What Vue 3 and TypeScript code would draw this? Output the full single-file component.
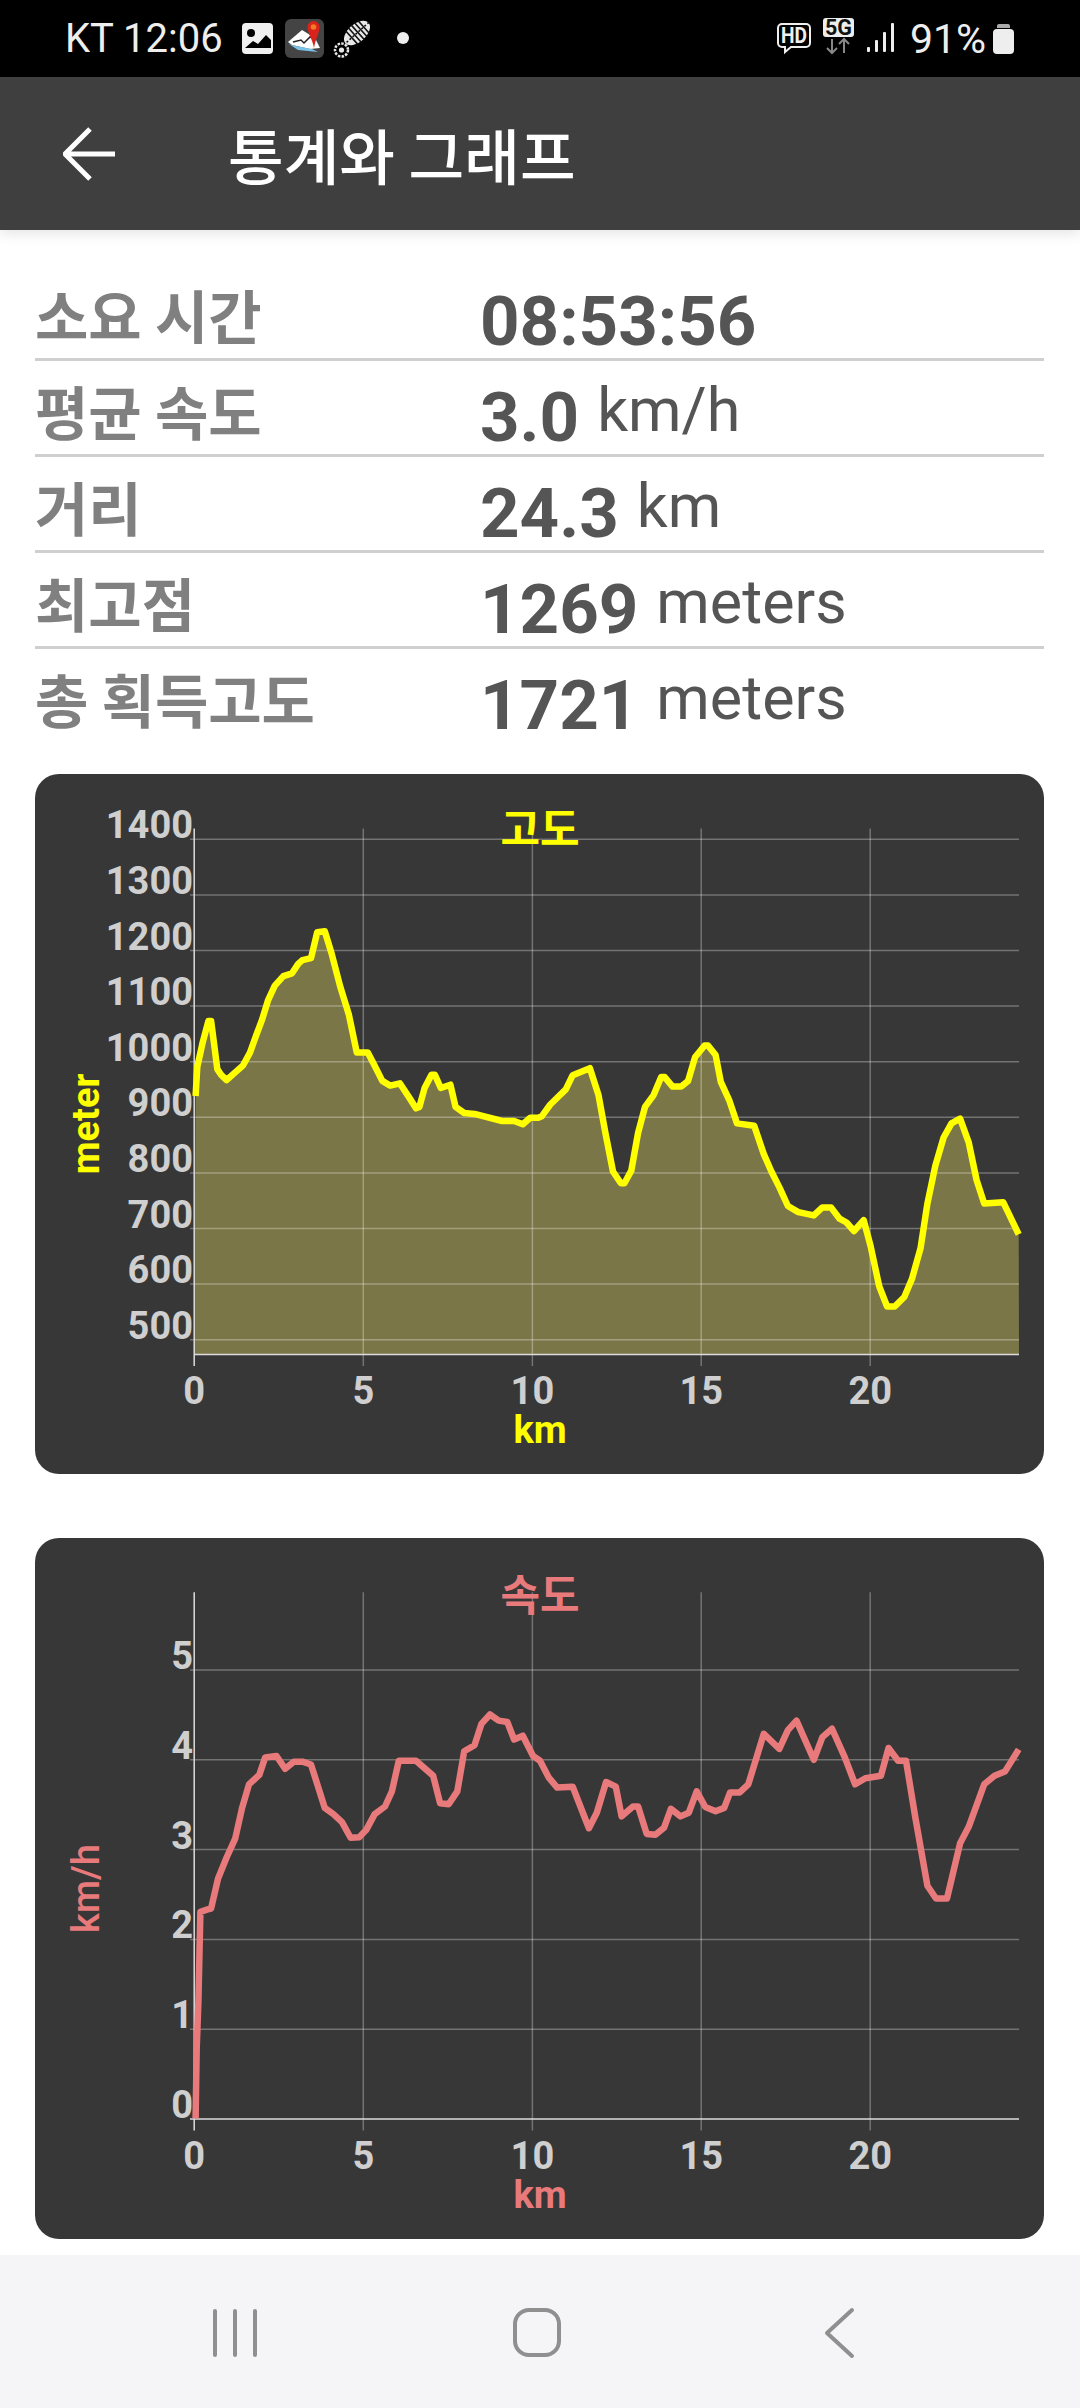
<script setup lang="ts">
type P = [number, number]

const toPts = (l: P[], r: P[], cut: number, y0: number): P[] => [
  ...l.filter((p) => p[0] <= cut).map(([x, y]): P => [x / 2.904 + 20, y / 2.119 + y0]),
  ...r.map(([x, y]): P => [x / 2.904 + 540, y / 2.119 + y0]),
]
const str = (a: P[]) => a.map(([x, y]) => `${x.toFixed(1)},${y.toFixed(1)}`).join(' ')

const elev = toPts(
  [[510,712],[515,650],[530,600],[547,553],[555,553],[565,610],[573,655],[585,668],[600,678],[625,662],[648,647],[668,620],[685,585],[703,550],[720,510],[740,478],[765,458],[790,452],[808,432],[820,424],[845,420],[863,365],[885,363],[905,410],[930,480],[955,540],[978,620],[1010,620],[1030,648],[1052,680],[1075,690],[1103,685],[1130,715],[1150,738],[1160,735],[1175,695],[1195,667],[1205,667],[1222,695],[1250,688],[1265,735],[1290,748],[1320,750],[1400,765],[1435,765],[1460,772],[1482,758],[1505,758]],
  [[5,755],[30,730],[75,698],[95,668],[145,653],[170,710],[190,790],[212,872],[235,897],[245,897],[265,870],[285,790],[305,735],[330,710],[352,672],[362,672],[385,692],[410,692],[430,680],[450,630],[478,605],[488,605],[510,625],[525,682],[550,722],[572,770],[622,775],[650,835],[672,872],[695,905],[720,945],[750,958],[795,965],[820,948],[845,948],[870,972],[890,980],[912,998],[940,975],[960,1030],[985,1115],[1008,1158],[1030,1158],[1058,1138],[1080,1100],[1105,1035],[1125,940],[1148,860],[1172,800],[1195,770],[1220,760],[1245,810],[1268,890],[1290,940],[1345,937],[1390,1005]],
  1510,
  760,
)
const speed = toPts(
  [[510,1248],[513,1100],[518,1000],[524,810],[545,805],[555,803],[575,740],[600,695],[625,655],[645,590],[665,540],[695,520],[712,483],[745,480],[770,507],[795,492],[820,492],[845,498],[885,590],[910,603],[935,620],[960,653],[985,652],[1005,637],[1030,603],[1060,587],[1080,555],[1100,490],[1150,490],[1200,522],[1220,580],[1245,582],[1270,555],[1290,470],[1320,457],[1340,412],[1365,392],[1390,405],[1415,408],[1435,445],[1460,437],[1490,480]],
  [[0,490],[25,525],[50,547],[95,545],[142,633],[165,600],[192,535],[220,545],[237,608],[270,587],[285,587],[310,645],[335,647],[360,632],[380,592],[408,608],[432,600],[455,555],[480,588],[510,597],[535,590],[552,557],[580,557],[605,540],[650,433],[695,465],[720,425],[745,405],[795,488],[820,440],[848,422],[885,483],[915,540],[945,527],[990,522],[1012,463],[1040,490],[1063,490],[1090,610],[1125,755],[1150,782],[1182,782],[1220,665],[1245,630],[1290,540],[1320,522],[1350,513],[1390,466]],
  1490,
  1530,
)

const xTicks = [
  { x: 194.2, t: '0' },
  { x: 363.3, t: '5' },
  { x: 532.4, t: '10' },
  { x: 701.2, t: '15' },
  { x: 870.2, t: '20' },
]
const elevY = [1400, 1300, 1200, 1100, 1000, 900, 800, 700, 600, 500].map((v, i) => ({
  v,
  y: 839.3 + i * 55.6,
}))
const speedY = [5, 4, 3, 2, 1, 0].map((v, i) => ({ v, y: 1670.6 + i * 89.76 }))

const rows = [
  { label: '소요 시간', value: '08:53:56', unit: '' },
  { label: '평균 속도', value: '3.0', unit: 'km/h' },
  { label: '거리', value: '24.3', unit: 'km' },
  { label: '최고점', value: '1269', unit: 'meters' },
  { label: '총 획득고도', value: '1721', unit: 'meters' },
]
</script>

<template>
  <div class="page">
    <div class="status">
      <span class="clock">KT 12:06</span>
      <svg class="s-icons" width="190" height="77" viewBox="235 0 190 77">
        <rect x="242" y="23" width="31" height="31" rx="4" fill="#f0f0f0" />
        <circle cx="251" cy="33" r="4" fill="#000" />
        <path d="M245 48l8-7 5 3 8-9 5 5v8h-26z" fill="#000" />
        <rect x="285" y="19" width="39" height="39" rx="6" fill="#444" />
        <path d="M288 42l14-12 13 8 5 10-10 1-18-4z" fill="#fff" />
        <path d="M289 44l9 6 20 2-6-3-16-3z" fill="#7cc2e4" />
        <path d="M293 42l8-2 3 3 6-6 5 2" fill="none" stroke="#222" stroke-width="1.500" />
        <path d="M307.500 27a6 6 0 1 1 12 0c0 6-4 12-5.500 21-1.500-9-6.500-15-6.500-21z" fill="#d9231c" />
        <circle cx="313.500" cy="27" r="2.800" fill="#ef7d20" />
        <g transform="rotate(48 357 33)">
          <ellipse cx="357" cy="33" rx="9" ry="15.500" fill="#e8e8e8" />
          <path d="M348 24h18M347 28h20M347 32h20M347 36h20M348 40h18" stroke="#111" stroke-width="1.600" />
          <path d="M357 17v32" stroke="#111" stroke-width="1.600" stroke-dasharray="2 2" />
        </g>
        <circle cx="341.500" cy="50" r="6.500" fill="none" stroke="#e8e8e8" stroke-width="2.500" stroke-dasharray="2.500 1.200" />
        <circle cx="341.500" cy="50" r="2.600" fill="#e8e8e8" />
        <circle cx="403" cy="38" r="6" fill="#eee" />
      </svg>
      <span class="spacer"></span>
      <svg class="hd" width="120" height="60" viewBox="775 10 120 60">
        <path d="M782 25h24a4 4 0 0 1 4 4v15a4 4 0 0 1-4 4h-15l-6 5v-5h-3a4 4 0 0 1-4-4v-15a4 4 0 0 1 4-4z" fill="none" stroke="#eee" stroke-width="2" />
        <text x="794" y="44" class="tiny" text-anchor="middle" textLength="26" lengthAdjust="spacingAndGlyphs">HD</text>
        <rect x="823" y="19" width="31" height="19" rx="3" fill="#eee" />
        <text x="838.500" y="36" class="tiny dark" text-anchor="middle" textLength="27" lengthAdjust="spacingAndGlyphs">5G</text>
        <path d="M832 40v14M827 49l5 5 5-5M844 54v-14M839 45l5-5 5 5" fill="none" stroke="#888" stroke-width="2" />
        <rect x="867" y="48" width="3" height="5" rx="1" fill="#eee" />
        <rect x="875" y="41" width="3" height="12" rx="1" fill="#eee" />
        <rect x="883" y="33" width="3" height="20" rx="1" fill="#eee" />
        <rect x="891" y="24" width="3" height="29" rx="1" fill="#eee" />
      </svg>
      <span class="pct">91%</span>
      <svg class="batt" width="21" height="30" viewBox="0 0 21 30">
        <path d="M6 0h9a2 2 0 0 1 2 2v2h-13v-2a2 2 0 0 1 2-2z" fill="#aaa" />
        <rect x="0" y="5" width="21" height="25" rx="4" fill="#eee" />
      </svg>
    </div>

    <header class="bar">
      <svg class="back" width="54" height="54" viewBox="0 0 54 54">
        <path d="M2 27h50M27 2L2 27l25 25" fill="none" stroke="#fff" stroke-width="5" />
      </svg>
      <h1 class="title">통계와 그래프</h1>
    </header>

    <main class="main">
      <section class="stats">
        <div v-for="r in rows" :key="r.label" class="row">
          <span class="lab">{{ r.label }}</span>
          <span class="val">{{ r.value }}</span>
          <span v-if="r.unit" class="unit">{{ r.unit }}</span>
        </div>
      </section>

      <div class="card">
        <svg class="chart" width="1009" height="700" viewBox="35 774 1009 700">
          <polygon :points="`194,1354.600 ${str(elev)} 1019,1354.600`" fill="#7b7647" />
          <g class="grid">
            <line v-for="t in elevY" :key="t.v" x1="190" :y1="t.y" x2="1019" :y2="t.y" />
            <line v-for="t in xTicks.slice(1)" :key="t.x" :x1="t.x" y1="828.400" :x2="t.x" y2="1366" />
          </g>
          <g class="axis">
            <line x1="194.200" y1="828.400" x2="194.200" y2="1366" />
            <line x1="194" y1="1354.600" x2="1019" y2="1354.600" />
          </g>
          <polyline :points="str(elev)" fill="none" stroke="#ffff00" stroke-width="6.500" stroke-linejoin="round" />
          <text v-for="t in elevY" :key="t.v" x="193" :y="t.y - 1" class="tick" text-anchor="end">{{ t.v }}</text>
          <text v-for="t in xTicks" :key="t.t" :x="t.x" y="1404" class="tick" text-anchor="middle">{{ t.t }}</text>
          <text x="540" y="845" class="ttl" fill="#ffff00" text-anchor="middle">고도</text>
          <text x="540" y="1443" class="axt" fill="#ffff00" text-anchor="middle">km</text>
          <text transform="translate(99 1124) rotate(-90)" class="axt" fill="#ffff00" text-anchor="middle">meter</text>
        </svg>
      </div>

      <div class="card second">
        <svg class="chart" width="1009" height="701" viewBox="35 1538.500 1009 701">
          <g class="grid">
            <line v-for="t in speedY.slice(0, 5)" :key="t.v" x1="190" :y1="t.y" x2="1019" :y2="t.y" />
            <line v-for="t in xTicks.slice(1)" :key="t.x" :x1="t.x" y1="1592.800" :x2="t.x" y2="2131" />
          </g>
          <g class="axis">
            <line x1="194.200" y1="1592.800" x2="194.200" y2="2131" />
            <line x1="190" y1="2119.400" x2="1019" y2="2119.400" />
          </g>
          <polyline :points="str(speed)" fill="none" stroke="#e97a7c" stroke-width="6.500" stroke-linejoin="round" />
          <text v-for="t in speedY" :key="t.v" x="193" :y="t.y - 1" class="tick" text-anchor="end">{{ t.v }}</text>
          <text v-for="t in xTicks" :key="t.t" :x="t.x" y="2169" class="tick" text-anchor="middle">{{ t.t }}</text>
          <text x="540" y="1611" class="ttl" fill="#e97a7c" text-anchor="middle">속도</text>
          <text x="540" y="2208" class="axt" fill="#e97a7c" text-anchor="middle">km</text>
          <text transform="translate(99 1889) rotate(-90)" class="axt reg" fill="#e97a7c" text-anchor="middle">km/h</text>
        </svg>
      </div>
    </main>

    <nav class="nav">
      <svg width="1080" height="153" viewBox="0 2255 1080 153">
        <g fill="none" stroke="#8f8f8f" stroke-width="4" stroke-linecap="round" stroke-linejoin="round">
          <path d="M215 2311v44M235 2311v44M255 2311v44" />
          <rect x="515" y="2310" width="44" height="45" rx="14" />
          <path d="M852 2310l-25 23 25 23" />
        </g>
      </svg>
    </nav>
  </div>
</template>

<style>
html, body { margin: 0; background: #fff; }
</style>

<style scoped>
.page {
  width: 1080px;
  height: 2408px;
  display: flex;
  flex-direction: column;
  overflow: hidden;
  background: #fff;
  font-family: Roboto, "Noto Sans CJK KR", sans-serif;
}
.status {
  height: 77px;
  background: #000;
  display: flex;
  align-items: center;
  padding-left: 65px;
  padding-right: 66px;
  box-sizing: border-box;
  color: #eee;
  flex: none;
}
.clock { font-size: 40px; width: 170px; white-space: nowrap; }
.s-icons { flex: none; }
.spacer { flex: 1; }
.hd { flex: none; margin-right: 15px; }
.pct { font-size: 41px; width: 83px; white-space: nowrap; }
.batt { flex: none; }
.tiny { font: 700 22px Roboto, sans-serif; fill: #eee; }
.dark { fill: #111; }
.bar {
  height: 153px;
  flex: none;
  background: #3f3f3f;
  display: flex;
  align-items: center;
  padding-left: 63px;
  box-sizing: border-box;
  box-shadow: 0 4px 12px rgba(0, 0, 0, 0.1);
  position: relative;
}
.back { flex: none; }
.title {
  margin: 0 0 0 111px;
  font: 500 60.500px "Noto Sans CJK KR", sans-serif;
  color: #fff;
  white-space: nowrap;
}
.main {
  flex: 1;
  min-height: 0;
  padding: 35px 36px 0 35px;
  display: flex;
  flex-direction: column;
}
.stats { display: flex; flex-direction: column; margin-bottom: 29px; }
.row {
  height: 96px;
  box-sizing: border-box;
  border-bottom: 3px solid #d0d0d0;
  display: flex;
  align-items: baseline;
  white-space: nowrap;
  line-height: 93px;
}
.row:last-child { border-bottom: none; }
.lab {
  width: 445px;
  flex: none;
  font: 700 58px/93px "Noto Sans CJK KR", sans-serif;
  color: #808080;
  transform: translateY(3px);
}
.val {
  font: 700 69px/93px Roboto, sans-serif;
  color: #555;
  transform: translateY(9px);
}
.unit {
  margin-left: 18px;
  font: 400 61px/93px Roboto, sans-serif;
  color: #555;
  transform: translateY(-1px);
}
.card {
  width: 1009px;
  height: 700px;
  flex: none;
  background: #373737;
  border-radius: 24px;
  overflow: hidden;
}
.second { height: 701px; margin-top: 64px; }
.chart { display: block; }
.grid line { stroke: #fff; stroke-opacity: 0.3; stroke-width: 1.500; }
.axis line { stroke: #ddd; stroke-width: 1.500; }
.tick { font: 700 38px Roboto, sans-serif; fill: #cfcfcf; }
.ttl { font: 700 43px "Noto Sans CJK KR", sans-serif; }
.axt { font: 700 38px Roboto, sans-serif; }
.reg { font-weight: 500; }
.nav { height: 153px; flex: none; background: #f5f5f7; }
.nav svg { display: block; }
</style>
